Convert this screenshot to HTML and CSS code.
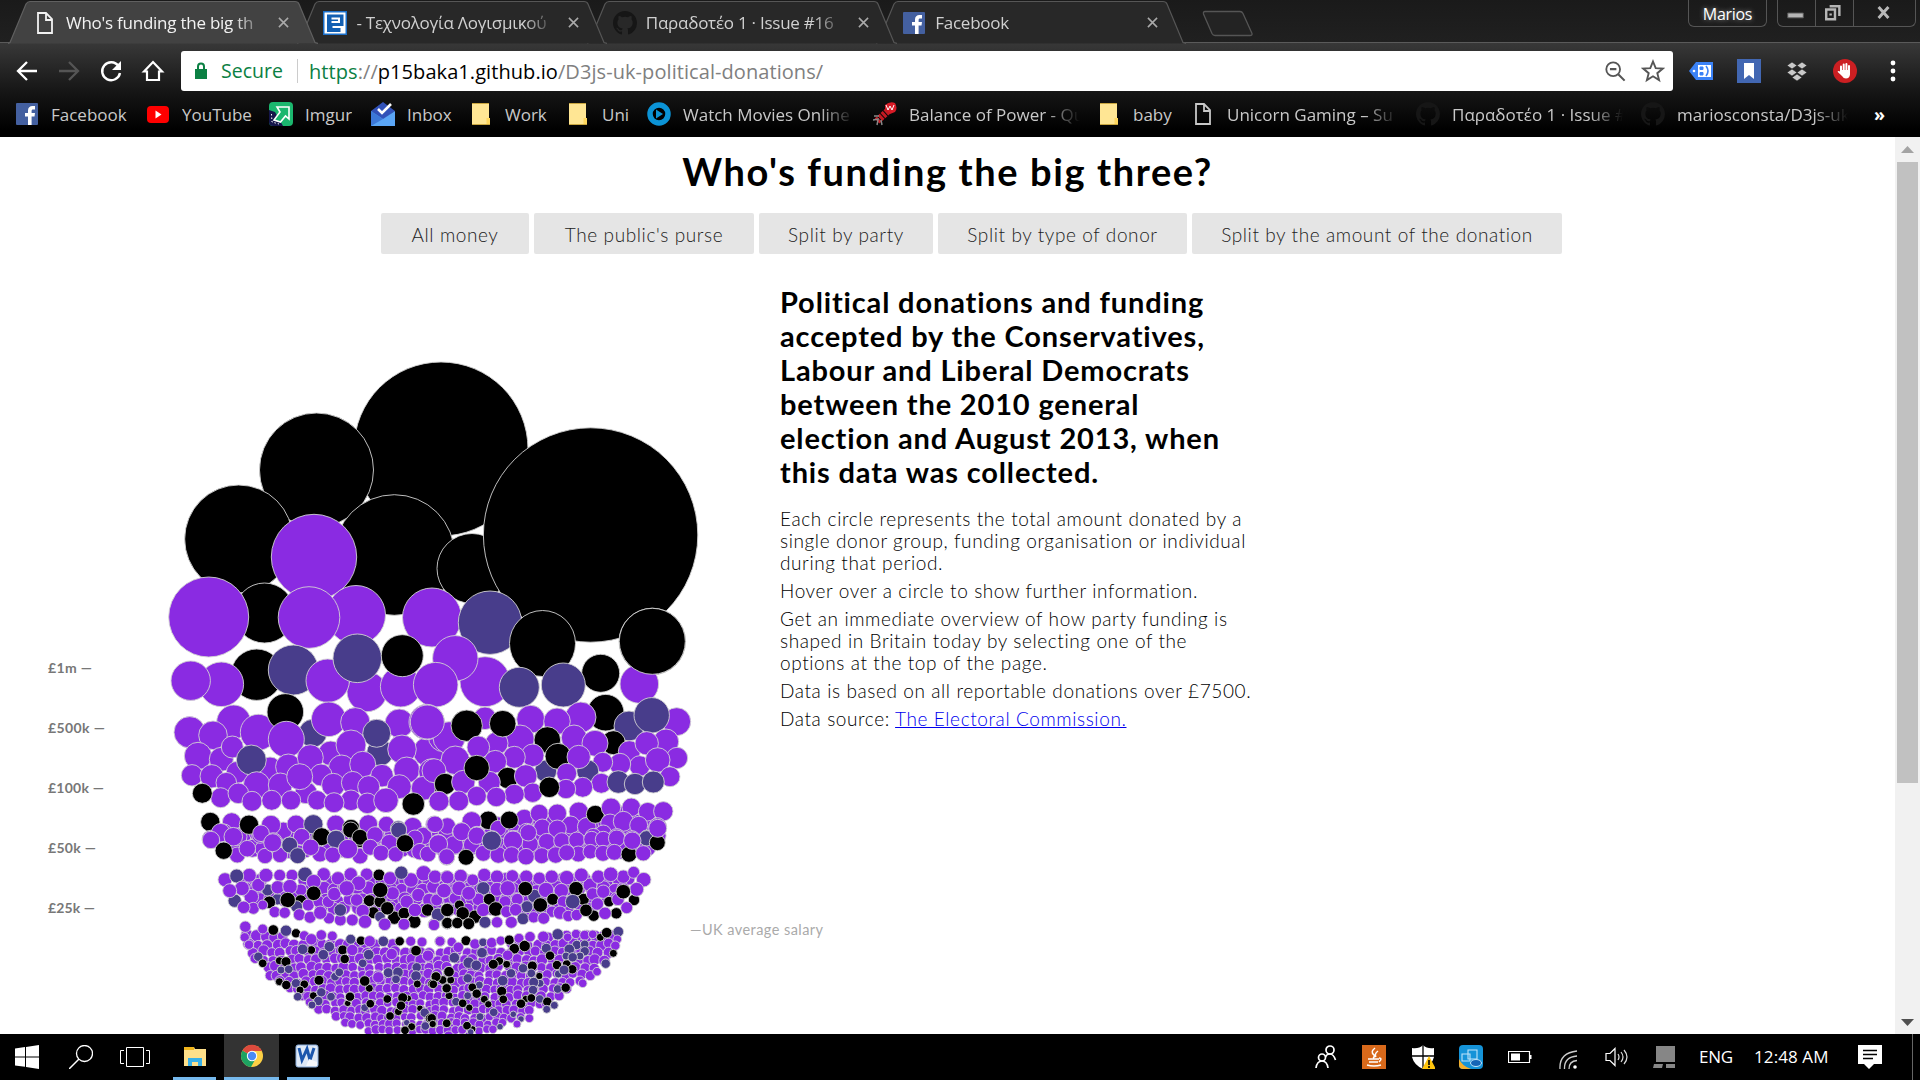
FILE: index.html
```html
<!DOCTYPE html>
<html lang="en">
<head>
<meta charset="utf-8">
<title>Who's funding the big three?</title>
<link rel="stylesheet" href="styles.css">
</head>
<body>
<svg class="defs" width="0" height="0">
  <symbol id="tabshape" viewBox="0 0 310 44"><path d="M0 43.5L2 42.500 18 4Q19.500 1.500 22 1.500H287Q290 1.500 291 4L307 42.500 310 43.500"/></symbol>
  <symbol id="page" viewBox="0 0 24 24"><path d="M5 2h8l6 6v14H5zM13 2v7h6" fill="none" stroke="currentColor" stroke-width="1.800"/></symbol>
  <symbol id="fb" viewBox="0 0 24 24"><rect x="1" y="1" width="22" height="22" rx="1" fill="#4460a0"/><path d="M13 23v-8.500h-3V11h3V8.500C13 5.500 14.800 4 17.500 4H20v3.400h-1.800c-1.300 0-1.600.6-1.600 1.600v2H20l-.5 3.500h-2.900V23z" fill="#fff"/></symbol>
  <symbol id="gh" viewBox="0 0 16 16"><path fill="currentColor" d="M8 0C3.580 0 0 3.580 0 8c0 3.540 2.290 6.530 5.470 7.590.4.070.55-.17.55-.38v-1.490c-2.230.48-2.690-.94-2.690-.94-.36-.93-.89-1.170-.89-1.170-.73-.5.050-.49.050-.49.8.060 1.230.83 1.230.83.72 1.210 1.870.87 2.330.66.070-.52.280-.87.510-1.070-1.780-.2-3.640-.89-3.640-3.950 0-.87.310-1.590.82-2.150-.08-.2-.36-1.020.08-2.120 0 0 .67-.21 2.200.82a7.600 7.600 0 0 1 4 0c1.530-1.040 2.200-.82 2.200-.82.44 1.100.16 1.920.08 2.120.51.56.82 1.270.82 2.150 0 3.070-1.870 3.750-3.650 3.950.29.25.54.73.54 1.480v2.200c0 .21.150.46.55.38A8 8 0 0 0 16 8c0-4.420-3.580-8-8-8z"/></symbol>
  <symbol id="folder" viewBox="0 0 24 24"><path d="M3 1.500h17v15l1 1V22H3z" fill="#ffe694"/><path d="M17.500 16h3.500v7h-3.500z" fill="#ffd75e"/><path d="M3 1.500h17M3 22.500h18" stroke="#c9a640" fill="none"/></symbol>
  <symbol id="close" viewBox="0 0 12 12"><path d="M1 1l10 10M11 1L1 11" stroke="currentColor" stroke-width="1.700"/></symbol>
</svg>

<header class="browser">
  <div class="tabstrip">
    <div class="tab active"><svg class="shape"><use href="#tabshape"/></svg><svg class="fav"><use href="#page"/></svg><span class="label">Who's funding the big th</span><svg class="x"><use href="#close"/></svg></div>
    <div class="tab t2"><svg class="shape"><use href="#tabshape"/></svg><svg class="fav" viewBox="0 0 24 24"><rect width="24" height="24" fill="#1b6fc9"/><rect x="1.500" y="1.500" width="21" height="21" fill="#fff"/><path d="M4 3.500h16.500v11.500H9.500v2h8v4H4z" fill="#125fb2"/><path d="M8.500 7.500H16v3.500H8.500" stroke="#fff" stroke-width="2" fill="none"/></svg><span class="label">- Τεχνολογία Λογισμικού</span><svg class="x"><use href="#close"/></svg></div>
    <div class="tab t3"><svg class="shape"><use href="#tabshape"/></svg><svg class="fav dim"><use href="#gh"/></svg><span class="label">Παραδοτέο 1 · Issue #16</span><svg class="x"><use href="#close"/></svg></div>
    <div class="tab t4"><svg class="shape"><use href="#tabshape"/></svg><svg class="fav"><use href="#fb"/></svg><span class="label">Facebook</span><svg class="x"><use href="#close"/></svg></div>
    <svg class="newtab" viewBox="0 0 52 27"><path d="M3 1.500H38Q40 1.500 41 3.500L50 23.500Q50.500 25.500 48 25.500H13Q11 25.500 10 23.500L1.500 4Q1 1.500 3 1.500z" fill="#232323" stroke="#555" stroke-width="1.300"/></svg>
    <div class="window">
      <div class="user">Marios</div>
      <div class="controls">
        <svg viewBox="0 0 38 26"><path d="M10 13h16v5H10z" fill="#b5b5b5" stroke="#555"/></svg>
        <svg viewBox="0 0 38 26"><path d="M10.500 9.500h9v10h-9zM14 6h10v10M15 13.500v2" fill="none" stroke="#b5b5b5" stroke-width="2.500"/></svg>
        <svg viewBox="0 0 62 26"><path d="M25 7l10 11M35 7L25 18" stroke="#b8b8b8" stroke-width="3"/></svg>
      </div>
    </div>
  </div>
  <div class="toolbar">
    <div class="nav">
      <svg viewBox="0 0 24 24"><path d="M22 12H4M12 3l-9 9 9 9" fill="none" stroke="#fff" stroke-width="2.300"/></svg>
      <svg viewBox="0 0 24 24"><path d="M2 12h18M12 3l9 9-9 9" fill="none" stroke="#555" stroke-width="2.300"/></svg>
      <svg viewBox="0 0 24 24"><path d="M19.500 7A9 9 0 1 0 21 14" fill="none" stroke="#fff" stroke-width="2.400"/><path d="M22 2v9h-9z" fill="#fff"/></svg>
      <svg viewBox="0 0 24 24"><path d="M3 12.500l9-9.500 9 9.500h-3V21H6v-8.500z" fill="none" stroke="#fff" stroke-width="2.200"/></svg>
    </div>
    <div class="omnibox">
      <svg class="lock" viewBox="0 0 14 18"><path d="M1 7h12v10H1z" fill="#0b8043"/><path d="M4 8V4.500a3 3 0 0 1 6 0V8" fill="none" stroke="#0b8043" stroke-width="2"/></svg>
      <span class="secure">Secure</span>
      <span class="url"><b>https</b>://<i>p15baka1.github.io</i>/D3js-uk-political-donations/</span>
      <svg class="mag" viewBox="0 0 24 24"><circle cx="10" cy="10" r="7.500" fill="none" stroke="#555" stroke-width="2"/><path d="M6.500 10h7M15.500 15.500l7 7" stroke="#555" stroke-width="2.300"/></svg>
      <svg class="star" viewBox="0 0 24 24"><path d="M12 2.500l2.700 6.600 7.100.5-5.500 4.600 1.800 6.900-6.100-3.800-6.100 3.800 1.800-6.900L2.200 9.600l7.100-.5z" fill="none" stroke="#555" stroke-width="1.900"/></svg>
    </div>
    <div class="exts">
      <svg viewBox="0 0 24 24"><path d="M7 3h17v18H7L0 12z" fill="#3b82f6"/><circle cx="5" cy="12" r="1.300" fill="#fff"/><path d="M9 6h13v12H9z" fill="#fff"/><path d="M11 8h3v2.500h-3zM11 13.500h3V16h-3z" stroke="#3b82f6" fill="#3b82f6"/><path d="M17 7q4 5 0 10" stroke="#3b82f6" stroke-width="1.600" fill="none"/></svg>
      <svg viewBox="0 0 24 24"><path d="M0 0h24v24H0z" fill="#4267b2"/><path d="M7 4h10v16l-5-4-5 4z" fill="#fff"/></svg>
      <svg viewBox="0 0 24 24"><path d="M7 3l5 3.500L7 10 2 6.500zM17 3l5 3.500-5 3.500-5-3.500zM7 10l5 3.500L7 17l-5-3.500zM17 10l5 3.500-5 3.500-5-3.500zM12 15l5 3.500-5 3.500-5-3.500z" fill="#c9c9c9" stroke="#222" stroke-width=".6"/></svg>
      <svg viewBox="0 0 24 24"><circle cx="12" cy="12" r="12" fill="#cc1f22"/><path d="M8 7.500v6M10.700 5.500v7M13.400 5v7M16 7v6" stroke="#fff" stroke-width="2" stroke-linecap="round"/><path d="M7 11h10v4.500Q16.500 19.500 13 19.500 10.500 19.500 9 17L4.500 12.800q1-1.500 3 .2z" fill="#fff"/></svg>
      <svg viewBox="0 0 24 24"><circle cx="12" cy="4" r="2.400" fill="#fff"/><circle cx="12" cy="12" r="2.400" fill="#fff"/><circle cx="12" cy="20" r="2.400" fill="#fff"/></svg>
    </div>
  </div>
  <nav class="bookmarks">
    <a class="w131"><svg><use href="#fb"/></svg><span>Facebook</span></a>
    <a class="w123"><svg viewBox="0 0 24 24"><rect x="1" y="4" width="22" height="17" rx="4" fill="#f00"/><path d="M9.500 8.500l6 4-6 4z" fill="#fff"/></svg><span>YouTube</span></a>
    <a class="w102"><svg viewBox="0 0 24 24"><rect width="24" height="24" rx="4" fill="#1bb76e"/><path d="M0 8l6 2 8 14H4q-4 0-4-4z" fill="#15154a"/><path d="M8 5h12v12l-3.500-3-5 6-6.500-2 6-8z" fill="#1bb76e" stroke="#fff" stroke-width="1.600"/><path d="M2.500 12l.5 8 7 2" stroke="#fff" stroke-dasharray="1.500 2" fill="none"/></svg><span>Imgur</span></a>
    <a class="w98"><svg viewBox="0 0 24 24"><path d="M0 9L12 0l12 9-12 9z" fill="#3151b8"/><path d="M0 9l12 8 12-8v15H0z" fill="#5aa5f5"/><path d="M0 9l12 8L0 24z" fill="#3c78d8"/><path d="M7 7l4 4 9-9" fill="none" stroke="#fff" stroke-width="2.600"/></svg><span>Inbox</span></a>
    <a class="w97"><svg><use href="#folder"/></svg><span>Work</span></a>
    <a class="w81"><svg><use href="#folder"/></svg><span>Uni</span></a>
    <a class="w226"><svg viewBox="0 0 24 24"><circle cx="12" cy="12" r="9" fill="#000" stroke="#0b93d6" stroke-width="5.500"/><path d="M9 7.500l7 4.500-7 4.500z" fill="#0b93d6"/></svg><span>Watch Movies Online</span></a>
    <a class="w224"><svg viewBox="0 0 24 24"><path d="M12 3q5-4 10-2 3 5 0 9l-5 2-5-4z" fill="#d81b27"/><path d="M4 19L16 8" stroke="#c41a22" stroke-width="7" stroke-dasharray="3 1"/><path d="M1 14l5 0M0 18l6-1M4 23l1-5M9 23l-1-5" stroke="#888" stroke-width="1.500"/><path d="M13 3l2 5 2-4 2 4 2-5" stroke="#fff" fill="none"/></svg><span>Balance of Power - Qu</span></a>
    <a class="w94"><svg><use href="#folder"/></svg><span>baby</span></a>
    <a class="w225"><svg><use href="#page"/></svg><span>Unicorn Gaming – Su</span></a>
    <a class="w225"><svg class="dim"><use href="#gh"/></svg><span>Παραδοτέο 1 · Issue #</span></a>
    <a class="w225"><svg class="dim"><use href="#gh"/></svg><span>mariosconsta/D3js-uk</span></a>
    <strong class="more">»</strong>
  </nav>
</header>

<div class="viewport">
  <main class="content">
    <h1>Who's funding the big three?</h1>
    <div class="buttons">
      <span class="btn b1">All money</span><span class="btn b2">The public's purse</span><span class="btn b3">Split by party</span><span class="btn b4">Split by type of donor</span><span class="btn b5">Split by the amount of the donation</span>
    </div>
    <div class="columns">
      <svg id="chart" viewBox="0 280 780 754" width="780" height="754">
        <g id="dots"></g>
        <g class="scale"><text x="48" y="673" textLength="44">£1m —</text><text x="48" y="733" textLength="57">£500k —</text><text x="48" y="793" textLength="56">£100k —</text><text x="48" y="853" textLength="48">£50k —</text><text x="48" y="913" textLength="47">£25k —</text></g>
        <text class="avg" x="690" y="935" textLength="133">—UK average salary</text>
      </svg>
      <article>
        <h2>Political donations and funding<br>accepted by the Conservatives,<br>Labour and Liberal Democrats<br>between the 2010 general<br>election and August 2013, when<br>this data was collected.</h2>
        <p>Each circle represents the total amount donated by a<br>single donor group, funding organisation or individual<br>during that period.</p>
        <p>Hover over a circle to show further information.</p>
        <p>Get an immediate overview of how party funding is<br>shaped in Britain today by selecting one of the<br>options at the top of the page.</p>
        <p>Data is based on all reportable donations over £7500.</p>
        <p>Data source: <a href="#">The Electoral Commission.</a></p>
      </article>
    </div>
  </main>
  <div class="scrollbar"><svg viewBox="0 0 25 25"><path d="M6 16l6.500-7 6.500 7z" fill="#a3a3a3"/></svg><div class="thumb"></div><svg class="down" viewBox="0 0 25 25"><path d="M6 9l6.500 7L19 9z" fill="#505050"/></svg></div>
</div>

<footer class="taskbar">
  <div class="cell start"><svg viewBox="0 0 24 24"><path d="M0 3.500l10-1.400v9.300H0zM11 2l13-2v11.400H11zM0 12.500h10v9.300L0 20.500zM11 12.500h13V24l-13-2z" fill="#fff"/></svg></div>
  <div class="cell search"><svg viewBox="0 0 24 24"><circle cx="15.500" cy="8.500" r="8" fill="none" stroke="#fff" stroke-width="1.300"/><path d="M10 14L0 24" stroke="#fff" stroke-width="1.500"/></svg></div>
  <div class="cell view"><svg class="wide" viewBox="0 0 30 24"><path d="M6.500 2.500h17v19h-17zM4 5.500H.5v13H4M26 5.500h3.500v13H26" fill="none" stroke="#fff"/></svg></div>
  <div class="cell app"><svg viewBox="0 0 24 24"><path d="M1 3h10l1 2h11v17H1z" fill="#ffe08a"/><path d="M1 3h10v3H1z" fill="#f0b51c"/><path d="M5 22v-8h14v8h-4v-4h-6v4z" fill="#39b1e8"/></svg></div>
  <div class="cell app current"><svg viewBox="0 0 24 24"><circle cx="12" cy="12" r="11" fill="#fdd045"/><path d="M12 12L2.500 6.500A11 11 0 0 0 11 23l5-9z" fill="#1da362"/><path d="M12 12L2.500 6.500A11 11 0 0 1 22 7H12z" fill="#dc4a3d"/><circle cx="12" cy="12" r="5.200" fill="#fff"/><circle cx="12" cy="12" r="4.200" fill="#4a8af4"/></svg></div>
  <div class="cell app word"><svg viewBox="0 0 24 24"><rect x="1" y="1" width="22" height="22" rx="2" fill="#dfe9f6" stroke="#8db0dd"/><path d="M4 4l3 12 5-11 3 11 4-12" fill="none" stroke="#1c57ad" stroke-width="3"/><path d="M14 15l8 3v4H11z" fill="#f7f9fc"/></svg></div>
  <div class="tray">
    <svg class="i1" viewBox="0 0 24 24"><circle cx="16" cy="5" r="4" fill="none" stroke="#fff" stroke-width="1.700"/><path d="M11.500 12q1-3 4.500-3t5.500 6" fill="none" stroke="#fff" stroke-width="1.700"/><circle cx="8" cy="12.500" r="3.500" fill="none" stroke="#fff" stroke-width="1.700"/><path d="M2 23q1-7 6-7t6 7" fill="none" stroke="#fff" stroke-width="1.700"/></svg>
    <svg class="i2" viewBox="0 0 24 24"><path d="M0 0h24v24H0z" fill="#d8691b"/><path d="M13 3q-5 4-1 7 1 2-1 3M16 6q-4 3-2 6M6 14h11M7 17h9M17 13q4 0 0 4M5 20q7 2 14 0" stroke="#fff" stroke-width="1.500" fill="none"/></svg>
    <svg class="i3" viewBox="0 0 24 24"><path d="M12 0q4 4 11 3v9q-2 8-11 12Q3 20 1 12V3q7 1 11-3z" fill="#fff"/><path d="M12 0v24M1 11h22" stroke="#000" stroke-width="1.300"/><path d="M18 11l7 13H11z" fill="#ffc40c"/><path d="M18 15v5M18 21v2" stroke="#000" stroke-width="1.600"/></svg>
    <svg class="i4" viewBox="0 0 24 24"><rect width="24" height="24" rx="4" fill="#1593d8"/><path d="M0 14q3 7 12 10H4q-4 0-4-4z" fill="#f4ae2b"/><path d="M3 9h8v7H3zM9 5h9v9H9z" fill="#1593d8" stroke="#bfe4fa" stroke-width="1.100"/><ellipse cx="17" cy="18" rx="5.500" ry="3.500" fill="#1565b7" stroke="#bfe4fa"/></svg>
    <svg class="i5" viewBox="0 0 24 24"><path d="M.5 6.500h21v11H.5z" fill="none" stroke="#fff" stroke-width="1.200"/><path d="M3 8.500h9v7H3zM22 10h1.500v4H22z" fill="#fff"/></svg>
    <svg class="i6" viewBox="0 0 24 24"><path d="M4 24Q3 8 21 6M8.500 24Q8 12 21 11M13 24Q13 16 21 15.500" stroke="#ccc" fill="none" stroke-width="1.300"/><circle cx="19" cy="22" r="1.800" fill="#fff"/></svg>
    <svg class="i7" viewBox="0 0 24 24"><path d="M1 8.500h4l5-5v17l-5-5H1z" fill="none" stroke="#fff" stroke-width="1.200"/><path d="M13 9q2 3 0 6M16 7q4 5 0 10M19 5q6 7 0 14" fill="none" stroke="#ddd" stroke-width="1.200"/></svg>
    <svg class="i8" viewBox="0 0 24 24"><path d="M3 1h19v16H3zM1 19h9l-1 4H0zM13 19h9v4h-9z" fill="#868686"/></svg>
    <span class="lang">ENG</span><span class="clock">12:48 AM</span>
    <svg class="i9" viewBox="0 0 24 24"><path d="M0 0h24v19h-8l-5 5-5-5H0z" fill="#fff"/><path d="M5 5.500h14M5 9.500h14M5 13.500h10" stroke="#000" stroke-width="1.300"/></svg>
    <i class="edge"></i>
  </div>
</footer>
<script src="chart.js"></script>
</body>
</html>
```
FILE: styles.css
```css
* { box-sizing: border-box; }
body { margin: 0; width: 1920px; height: 1080px; overflow: hidden; display: flex; flex-direction: column; background: #fff; font-family: "Open Sans", "Noto Sans", sans-serif; }
.defs { position: absolute; }
svg { flex: none; display: block; }
.browser { height: 137px; flex: none; background: #000; color: #fff; }
.tabstrip { height: 43px; display: flex; padding-left: 8px; background: linear-gradient(#1a1a1a, #202020); border-bottom: 1px solid #5a5a5a; }
.tab { position: relative; width: 310px; height: 43px; margin-right: -20.600px; display: flex; align-items: center; padding: 2px 27px 0 26px; color: #d0d0d0; font-size: 17px; z-index: 3; }
.tab .shape { position: absolute; left: 0; top: 0; width: 310px; height: 44px; fill: #282828; stroke: #565656; stroke-width: 1.200; z-index: -1; }
.tab.active { z-index: 4; color: #f2f2f2; }
.tab.active .shape { fill: #424242; stroke: #606060; }
.t2 { z-index: 3; } .t3 { z-index: 2; } .t4 { z-index: 1; }
.fav { width: 24px; height: 24px; }
.active .fav { margin-left: -1px; }
.dim { color: #161616; }
.label { width: 200px; margin-left: 9px; overflow: hidden; white-space: nowrap; letter-spacing: -.25px; -webkit-mask-image: linear-gradient(90deg, #000 84%, transparent); mask-image: linear-gradient(90deg, #000 84%, transparent); }
.x { width: 11px; height: 11px; margin-left: 12px; color: #aaa; }
.newtab { width: 52px; height: 27px; margin: 10px 0 0 16px; }
.t4 { margin-right: 0; }
.window { margin-left: auto; display: flex; gap: 10px; padding-right: 4px; height: 27px; }
.user { width: 79px; border: 1px solid #555; border-top: 0; border-radius: 0 0 6px 6px; text-align: center; font-size: 16px; line-height: 28px; letter-spacing: -.3px; text-shadow: 0 0 5px #999; }
.controls { display: flex; width: 139px; border: 1px solid #555; border-top: 0; border-radius: 0 0 6px 6px; }
.controls svg { height: 26px; width: 38px; border-right: 1px solid #555; }
.controls svg:last-child { width: 61px; border: 0; }
.toolbar { height: 48px; display: flex; align-items: flex-end; background: linear-gradient(#383838, #161616); }
.nav { width: 181px; height: 40px; padding-left: 15px; display: flex; align-items: center; gap: 18px; }
.nav svg { width: 24px; height: 24px; }
.omnibox { width: 1492px; height: 40px; background: #fff; border-radius: 3px; display: flex; align-items: center; padding: 0 8px 0 13px; font-size: 19.500px; }
.lock { width: 14px; height: 18px; }
.secure { color: #0b8043; width: 77px; margin-left: 13px; border-right: 1px solid #ccc; height: 24px; line-height: 24px; }
.url { margin-left: 11px; color: #808080; font-size: 20px; letter-spacing: .07px; }
.url b { font-weight: 400; color: #0b8043; } .url i { font-style: normal; color: #000; }
.mag { width: 22px; height: 22px; margin-left: auto; margin-right: 15px; }
.star { width: 24px; height: 24px; }
.exts { height: 40px; display: flex; align-items: center; gap: 24px; padding-left: 16px; }
.exts svg { width: 24px; height: 24px; }
.bookmarks { height: 46px; display: flex; align-items: center; padding-left: 15px; background: linear-gradient(#161616, #000 85%); font-size: 17px; color: #c8c8c8; }
.bookmarks a { display: flex; align-items: center; gap: 12px; flex: none; white-space: nowrap; }
.bookmarks svg { width: 24px; height: 24px; }
.bookmarks span { overflow: hidden; }
.w131 { width: 131px; } .w123 { width: 123px; } .w102 { width: 102px; } .w98 { width: 98px; } .w97 { width: 97px; } .w81 { width: 81px; } .w226 { width: 226px; } .w224 { width: 224px; } .w94 { width: 94px; } .w225 { width: 225px; }
.w226 span, .w224 span, .w225 span { width: 171px; -webkit-mask-image: linear-gradient(90deg, #000 80%, transparent); mask-image: linear-gradient(90deg, #000 80%, transparent); }
.more { color: #fff; margin-left: 8px; font-size: 18px; }
.viewport { height: 897px; flex: none; display: flex; overflow: hidden; }
.content { width: 1895px; overflow: hidden; font-family: Lato, sans-serif; color: #000; }
h1 { margin: 10px 0 0; font-size: 38px; line-height: 48px; text-align: center; letter-spacing: 1.6px; }
.buttons { display: flex; gap: 5px; margin: 18px 0 26px 381px; }
.btn { height: 41px; line-height: 43px; background: #e5e5e5; border-radius: 2px; text-align: center; font-size: 19px; letter-spacing: .6px; color: #222; font-weight: 300; }
.b1 { width: 148px; } .b2 { width: 220px; } .b3 { width: 174px; } .b4 { width: 249px; } .b5 { width: 370px; }
.columns { display: flex; align-items: flex-start; }
#chart { overflow: visible; }
#dots { stroke: #d3d3d3; stroke-width: .9; }
.p { fill: #8a2be2; } .s { fill: #483d8b; } .k { fill: #000; }
.scale { font-size: 14px; font-weight: 700; fill: #777; }
.avg { font-size: 14.500px; fill: #aaa; }
article { white-space: nowrap; padding-top: 5px; }
h2 { margin: 0 0 19px; font-size: 29px; line-height: 34px; letter-spacing: .85px; }
p { margin: 0 0 6px; font-size: 19px; line-height: 22px; letter-spacing: .6px; color: #000; font-weight: 300; }
p a { color: #00e; }
.scrollbar { width: 25px; background: #f1f1f1; }
.scrollbar svg { width: 25px; height: 25px; }
.thumb { width: 21px; margin: 0 2px; height: 621px; background: #c1c1c1; }
.down { margin-top: 227px; }
.taskbar { height: 46px; display: flex; background: #000; color: #fff; }
.cell { display: flex; align-items: center; justify-content: center; padding-bottom: 1px; }
.cell svg { width: 24px; height: 24px; }
.cell svg.wide { width: 30px; }
.start { width: 54px; } .search { width: 54px; } .view { width: 54px; margin-right: 11px; }
.app { width: 43px; border-bottom: 3px solid #76b9ed; padding: 0; }
.current { width: 55px; margin: 0 8px; background: #333; }
.word { padding-right: 3px; }
.tray { margin-left: auto; display: flex; align-items: center; padding-right: 7px; font-size: 17px; height: 45px; }
.tray svg { width: 24px; height: 24px; }
.i2, .i3, .i4, .i5, .i6, .i7, .i8 { margin-left: 24.500px; }
.tray .i1 { margin-left: 0; }
.lang { width: 35px; margin-left: 22px; letter-spacing: -.3px; }
.clock { width: 82px; margin-left: 20px; white-space: nowrap; letter-spacing: .1px; }
.i9 { margin-left: 22px; }
.edge { width: 1px; height: 46px; background: #666; margin-left: 30px; }
```
FILE: chart.js
```js
// Donor groups: p = companies and individuals, s = societies, k = unions and public funds.
// Each cluster is listed in its own grid: origin x, origin y, units per pixel.
const clusters = [
  [0, 0, 1, `k441,449,87 k316.5,470,57 k238.7,539,54 k394.3,555,60.3 k472,568.5,35 k590.6,535,107.2 p314,557,42.7 k264.5,613,30 p208.7,617,40 p356,615,29.5 p309,617.5,30.8 p432,617.5,29.5 s490,622.7,31.7 k542.5,643.5,33 k652.3,641.5,33.3`],
  [150, 640, 3, `p651,155,60 k320,104,77 s430,90,75 p214,133,67 p122,122,59 p533,122,65`],
  [430, 640, 3, `p165,125,75 p76,55,68 p628,132,58 p-88,140,61 p17,134,67 s268,142,60 k512,100,57 s400,135,66 k667,4,99`],
  [150, 640, 3, `s622,55,73 k757,47,63 p119,277,47 p251,246,51 p325,277,54 p189,286,43 k406,216,55 s488,280,42 p536,238,52 p616,247,44 p748,250,43 s690,338,40 s680,280,42
    p409,298,54 p144,348,41 p214,358,36 p247,321,33 p835,335,45 p880,290,45 p830,246,53 p542,340,37 p603,315,45 p756,328,43
    p262,397,33 p360,386,35 s304,360,45 p415,380,38 p575,385,40 p481,353,39 p638,373,39 p770,390,39 p845,395,39 p126,406,32 p320,435,40 p391,435,36 p185,409,35 p229,428,31
    p513,405,33 p468,458,33 p449,410,39 p550,435,35 p696,407,34 p608,428,34 p748,440,36 p656,440,33 k875,440,25 p820,445,36 p212,473,30 p265,460,31 k157,460,30
    p306,484,30 p365,481,30 p423,481,29 p502,481,29 p603,481,31 p552,488,30 p652,490,31 p708,481,37 k790,492,34 p867,484,30`],
  [430, 640, 3, `p740,245,42 k527,218,55 p452,232,46 s597,258,45 s665,226,53 p165,235,34 p57,293,48 p-8,246,51 p302,238,42 p381,244,40 p270,298,43 k110,257,47
    p200,310,34 k218,251,40 p145,322,34 k352,300,40 p432,293,38 k550,308,36 p495,310,39 p598,335,33 p708,305,38 p650,310,35 p741,354,32 p629,378,31 p683,360,37 p570,372,32 p518,367,30
    s347,393,33 p308,346,34 k384,349,39 s473,393,33 p446,351,35 p253,352,33 p196,365,34 p76,361,43 p12,392,36 p410,400,30 k45,432,32 k233,414,32 p287,408,34 p178,427,33 p100,426,35 k140,384,38
    p514,430,30 p720,410,30 s565,426,34 s615,432,32 s670,426,33 p458,442,30 p408,447,29 p308,458,29 k358,442,31 p253,463,30 p199,471,29 p140,468,29 p86,483,30 p27,484,30`]
];
const lower = [
  [150, 640, 3, `p245,546,28 k181,546,29 p222,578,26 p265,590,26 p182,597,26 p330,585,25 k297,554,29 p400,572,26 p363,555,29 p438,552,27 p455,592,25 k510,588,25 s490,553,29 p557,552,27 s558,596,26 k630,598,25 p655,552,28 k603,564,26 p680,588,25 p709,553,24 p788,560,28 k768,605,22 s745,566,24 p820,588,26 p852,553,25 p370,605,27 s418,615,24`],
  [430, 640, 3, `k175,541,28 p125,544,29 p283,535,27 p205,565,24 k238,540,27 p328,520,27 p382,520,28 p446,515,29 p422,555,27 p470,560,28 k496,523,27 p543,503,29 p604,502,28 p653,515,28 p700,514,29 p52,558,25 p15,553,25 p94,575,27 p290,577,27 p337,563,26 p382,567,27 p540,550,28 p580,544,30 p626,556,27 p683,560,27 s187,597,25 p141,585,26 p248,597,26 p520,580,25 p560,592,26 p490,590,25 s650,592,22 p606,597,25`],
  [200, 830, 3, `p62,8,28 p33,30,26 p112,75,24 p100,20,28 p183,10,25 p142,56,25 k71,62,26 p195,78,23 p240,75,23 p305,20,25 s269,45,24 p218,38,27 s293,77,24 p360,72,24 k365,20,27 p332,52,25 k452,0,24 k480,22,24 s408,28,27 p398,75,24 p480,78,24 p444,57,29 p525,15,25 p511,52,24 p568,38,25 p543,69,24 p587,73,23 s596,0,24 p645,25,25 k615,40,26 p660,65,25 p684,72,24 p715,40,27 p740,82,24`],
  [430, 830, 3, `p72,45,28 p25,42,28 p50,80,24 p95,5,27 p125,45,25 k108,82,24 p140,17,26 p160,70,24 p205,75,25 s185,32,29 p300,42,25 p249,32,29 p245,75,25 p350,35,25 p295,8,25 p335,77,24 p288,80,25 p395,32,24 p377,75,25 p440,30,24 p445,72,24 p410,68,24 p485,28,24 p520,28,24 p481,65,22 p519,70,24 p560,25,25 p553,67,24 s650,25,23 k597,73,24 p607,32,26 k682,38,24 p683,-5,27 p640,70,23`],
  [200, 830, 3, `s203,180,18 s232,208,17 p175,165,20 p75,149,21 p148,136,21 s110,138,21 p198,136,21 p239,136,18 p276,136,18 p302,180,18 p371,133,20 s315,133,22 p414,145,20 p452,133,20 p500,133,19 k537,135,18 p570,145,20 p633,150,22 s604,128,20 p709,142,18 p671,130,23 p740,140,19
    s104,212,20 p154,200,22 p126,175,22 p89,182,21 p233,172,20 p270,170,22 p341,155,22 k302,212,18 s290,230,18 k263,210,23 k208,217,19 p325,225,18 p357,215,18 k341,190,22 p385,215,18 p403,192,20 p448,208,18 p476,160,22 p440,175,23 p470,210,19 k508,212,18 k520,248,18 k540,215,18 p578,190,20 k541,180,23 p620,215,20 p655,195,20 p700,170,20 p730,185,21 p688,210,20
    p160,235,18 p131,232,19 p188,225,15 p224,246,17 p254,248,17 p298,254,18 p330,262,18 p387,265,17 p361,248,20 p421,270,18 s421,240,19 p457,270,18 p488,243,20 p495,275,20 s540,260,16 k583,263,20 k562,235,20 p554,283,19 k612,250,18 k643,275,20 p645,240,20 k683,240,19 p612,283,18 k742,280,18 p702,283,18 s715,254,20 k741,240,18`],
  [430, 830, 3, `p15,140,20 p52,142,20 p128,150,18 p92,138,20 s160,175,20 p163,135,20 p201,140,20 p247,138,19 p289,140,20 p328,145,19 p365,140,20 p410,143,22 p480,165,21 p454,135,21 p505,140,20 p580,140,20 p542,133,22 p611,127,18 p641,149,22
    p20,210,18 p75,205,18 p42,182,22 p87,175,22 p145,208,19 p116,190,21 k178,208,18 p201,178,21 p233,175,23 p225,215,18 p262,208,18 s313,198,20 k286,176,22 s291,230,18 p348,180,23 p394,182,22 k368,208,18 k331,225,22 p400,215,18 k460,208,18 k438,176,22 s428,215,22 p488,192,19 p520,185,20 k537,215,16 p564,208,19 k612,210,17 p620,178,21 k580,185,22
    k88,225,15 s24,254,20 k52,240,20 k135,260,20 k98,250,20 p160,240,20 k197,237,22 p230,245,18 p257,239,19 s279,266,18 p244,277,18 p311,262,17 p366,245,17 p341,265,18 p390,248,20 p415,258,17 p440,255,17 k491,257,17 k468,241,19 p502,222,19 k559,250,17 p525,250,19 p590,233,18 p12,285,17 k52,279,17 k82,279,17 k116,281,18 s165,277,18 p201,277,17`]
];
const smallest = [
  [200, 830, 3, `p136,290,17 p134,322,14 p147,344,14 p188,297,15 k220,300,16 k288,310,14 s258,302,17 p313,317,15 p364,315,16 p397,318,15 s452,328,15 k483,332,14 p509,334,17 s550,334,16 k599,334,14 p632,334,15 p666,336,15 p720,334,16 p334,328,17 k334,360,13 s308,358,16 s388,350,16 s370,374,16 k428,360,15 p457,360,17 k434,387,14 s506,374,16 s488,400,13 p575,372,17 k648,362,16 p684,377,17 s175,380,14 k188,400,13 k238,392,12 k258,395,15 s243,420,12 s266,418,13 s405,440,13 s418,427,13 p535,442,17 s565,428,15 s594,427,16 s588,448,13 s650,412,14 s648,438,16 k652,462,12 k697,462,14 k708,440,15 k730,450,12 k745,425,15 k740,475,14
    k238,455,12 k259,465,14 s288,460,14 k313,463,13 k300,480,12 k357,451,15 k508,475,12 k494,453,16 s293,500,13 k340,497,12 s364,487,14 s355,513,14 s393,500,13 s336,525,12 k443,520,10 k450,500,14 s494,533,12 k511,521,13 k562,507,13 k625,505,10 k608,503,15 k595,545,12 k603,527,14 k570,558,13 k660,535,10 s674,548,14 k700,582,11 k690,565,14 s676,588,13 k741,580,13 s620,578,10 k635,590,12 k615,601,13`],
  [430, 830, 3, `p30,334,15 p65,336,14 p85,352,16 k108,332,15 p135,342,16 s159,337,13 p185,338,16 p212,332,14 k238,330,15 p267,325,15 k253,356,16 k284,348,17 p300,320,16 p340,320,17 s349,355,15 s383,313,17 p413,322,13 p438,312,14 p464,316,15 p488,313,13 s156,368,16 s73,383,16 k360,377,14 s116,398,17 s139,406,16 k208,393,13 k190,403,15 k230,403,12 p233,376,16 k307,408,15 s279,415,14 k381,405,14 k410,402,13 k427,418,14 s385,432,12 s402,420,15 s440,345,14 s418,358,16 s464,343,13 s464,364,14 s408,378,12 s450,378,12 s428,382,14 k511,322,12 k530,308,16 s565,305,16 p562,328,13 p556,347,14 k550,370,12 s527,401,14 p501,425,13 p458,460,13 s243,430,14 s304,430,13 k328,438,11 s218,452,16 s330,460,12 s311,457,15 s309,480,14 s148,465,12 k127,472,13 k140,491,14 s113,445,14 s113,497,12
    k38,450,13 k18,440,15 k10,463,13 k62,450,12 k57,425,16 k57,497,12 k50,475,14 k215,484,15 k220,508,13 k163,508,12 k175,523,11 s78,515,13 k98,520,13 k118,533,11 k287,507,11 k273,521,14 k304,504,13 s329,507,13 k352,515,14 s373,526,12 s350,538,12 s383,477,13 k407,473,14 s191,547,13 s150,560,12 s250,553,10 s273,567,10 p298,565,13 p261,582,12 k50,580,13 k5,565,14 k8,582,11 k128,597,10 k111,587,13 s122,606,10 s210,590,10`]
];
const dots = document.getElementById("dots");
function circle(cls, x, y, r) {
  const c = document.createElementNS("http://www.w3.org/2000/svg", "circle");
  c.setAttribute("class", cls);
  c.setAttribute("cx", x.toFixed(1));
  c.setAttribute("cy", y.toFixed(1));
  c.setAttribute("r", r.toFixed(1));
  dots.appendChild(c);
}
function draw(list) {
  for (const [ox, oy, s, text] of list)
    for (const t of text.trim().split(/\s+/)) {
      const [x, y, r] = t.slice(1).split(",").map(Number);
      circle(t[0], ox + x / s, oy + y / s, r / s);
    }
}
let seed = 7;
const rnd = () => (seed = (seed * 16807) % 2147483647) / 2147483647;
function inside(poly, x, y) {
  let hit = false;
  for (let i = 0, j = poly.length - 1; i < poly.length; j = i++) {
    const [a, b] = poly[i], [c, d] = poly[j];
    if (b > y !== d > y && x < (c - a) * (y - b) / (d - b) + a) hit = !hit;
  }
  return hit;
}
// Packs the many near-equal donations of one band into its outline.
function pack(poly, y0, y1, r0, r1) {
  let row = 0;
  for (let y = y0; y < y1;) {
    const r = r0 + (r1 - r0) * (y - y0) / (y1 - y0);
    for (let x = 160 + (row % 2) * r; x < 700; x += r * 1.72) {
      const px = x + (rnd() - .5) * r * .6, py = y + (rnd() - .5) * r * .6;
      if (inside(poly, px, py)) circle("p", px, py, r * (.95 + rnd() * .2));
    }
    y += r * 1.5;
    row++;
  }
}
draw(clusters);
pack([[215,828],[430,832],[600,812],[662,812],[658,840],[645,850],[440,855],[225,850]], 812, 858, 8, 8);
pack([[228,880],[640,878],[625,900],[590,910],[430,918],[270,906],[240,898]], 880, 918, 6.5, 6.5);
draw(lower);
pack([[241,926],[262,932],[300,939],[350,943],[430,945],[500,944],[530,939],[575,935],[592,936],[612,935],[618,938],[616,949],[609,960],[597,971],[581,982],[567,993],[551,1002],[536,1012],[517,1019],[500,1029],[480,1036],[380,1036],[360,1029],[335,1020],[318,1012],[300,1001],[284,989],[268,975],[257,963],[247,949],[243,938]], 928, 1040, 5.4, 4.2);
draw(smallest);
```
